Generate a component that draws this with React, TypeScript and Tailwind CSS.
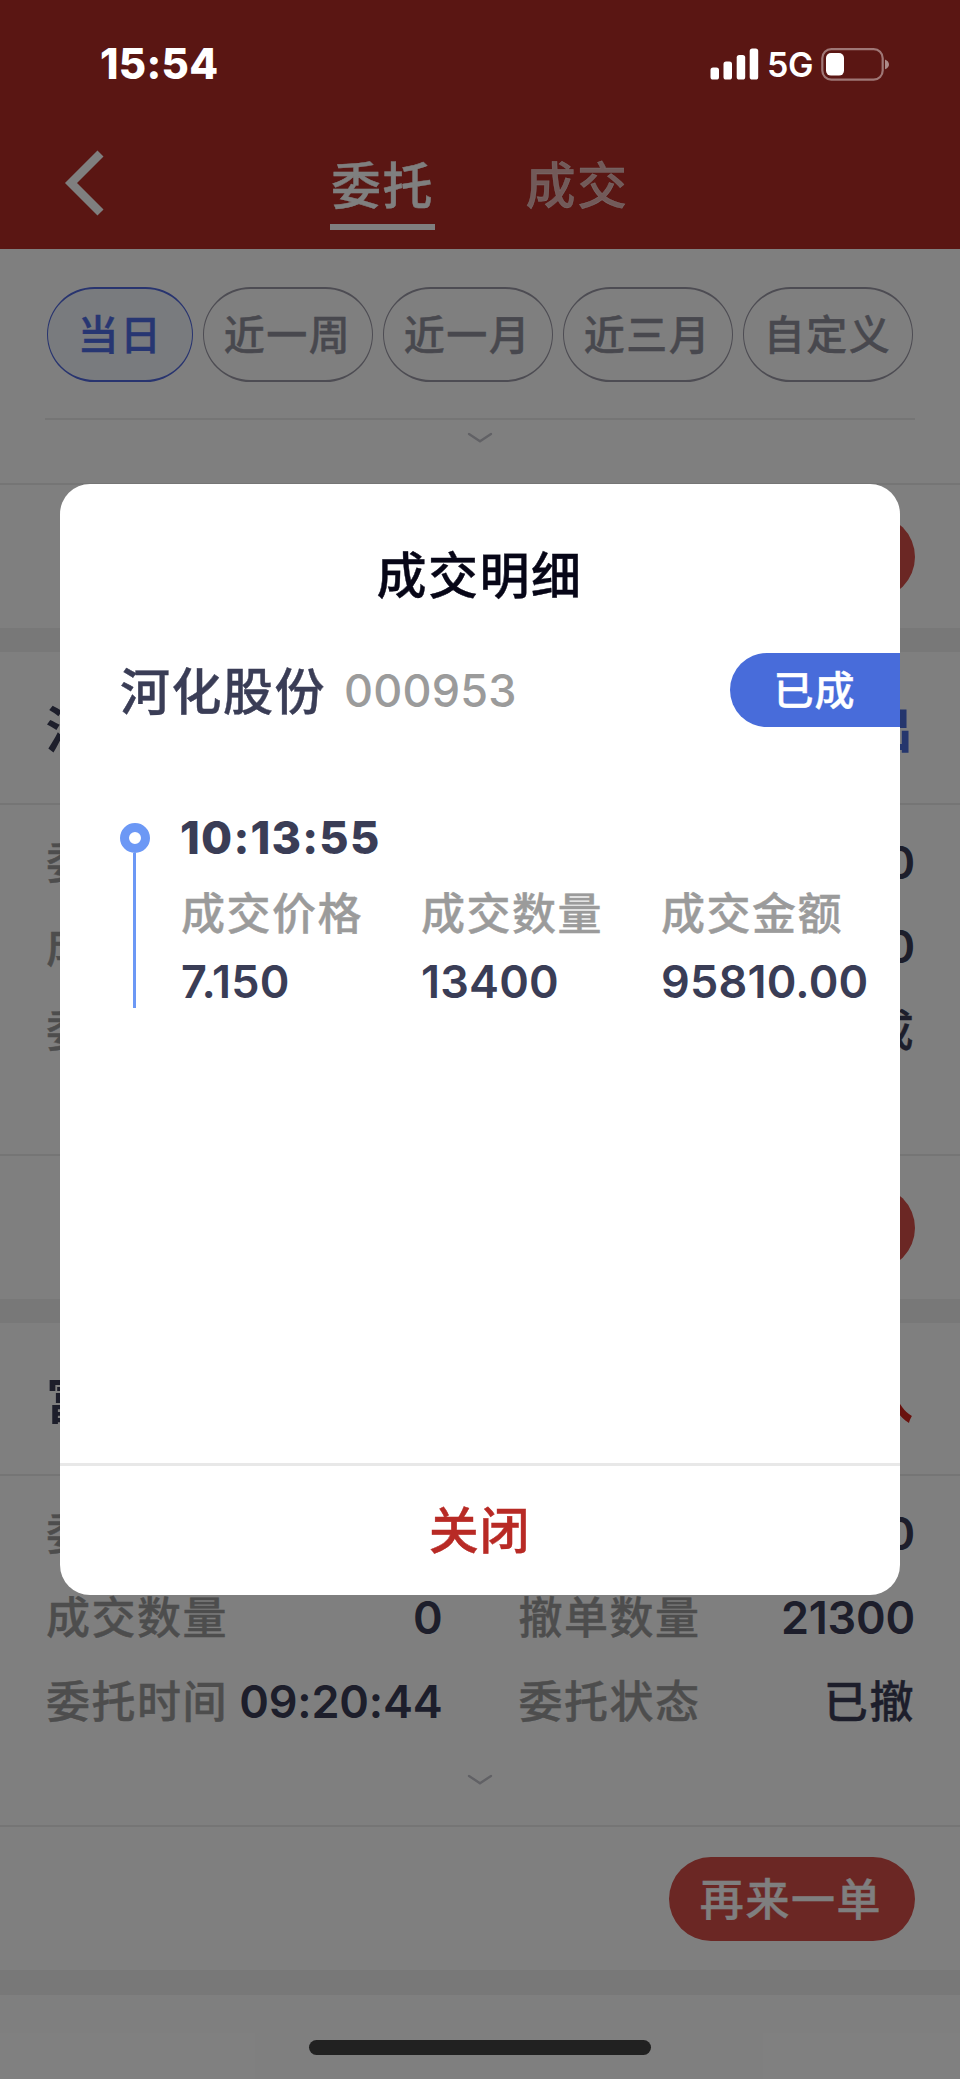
import { useState } from 'react';

interface Field {
  label: string;
  value: string;
}

interface Order {
  id: string;
  name: string;
  side: 'buy' | 'sell';
  fields: Field[];
}

const RANGES = ['当日', '近一周', '近一月', '近三月', '自定义'];

// thickens Chinese glyphs slightly, the installed face has no real medium weight
const CJK = 'font-medium [-webkit-text-stroke:0.4px]';

const ORDERS: Order[] = [
  {
    id: '1',
    name: '河化股份',
    side: 'sell',
    fields: [
      { label: '委托价格', value: '7.150' },
      { label: '委托数量', value: '13400' },
      { label: '成交数量', value: '13400' },
      { label: '撤单数量', value: '0' },
      { label: '委托时间', value: '10:13:55' },
      { label: '委托状态', value: '已成' },
    ],
  },
  {
    id: '2',
    name: '富',
    side: 'buy',
    fields: [
      { label: '委托价格', value: '0' },
      { label: '委托数量', value: '21300' },
      { label: '成交数量', value: '0' },
      { label: '撤单数量', value: '21300' },
      { label: '委托时间', value: '09:20:44' },
      { label: '委托状态', value: '已撤' },
    ],
  },
];

const DEAL: Field[] = [
  { label: '成交价格', value: '7.150' },
  { label: '成交数量', value: '13400' },
  { label: '成交金额', value: '95810.00' },
];

const StatusBar = () => (
  <div className="absolute inset-x-0 top-0 z-20 flex h-[128px] items-center justify-between pl-[100px] pr-[70px] text-white">
    <span className="text-[42px] leading-none font-extrabold tracking-[0.3px]">15:54</span>
    <div className="flex items-center">
      <svg width="50" height="32" viewBox="0 0 50 32" fill="currentColor">
        <rect x="0.5" y="19.5" width="8.5" height="12" rx="2.6" />
        <rect x="13.5" y="13.5" width="8.5" height="18" rx="2.6" />
        <rect x="26.7" y="7" width="8.5" height="24.5" rx="2.6" />
        <rect x="39.7" y="0.5" width="8.5" height="31" rx="2.6" />
      </svg>
      <span className="ml-[7px] w-[54px] pt-0.5 text-[34px] leading-none font-semibold tracking-[-0.3px]">5G</span>
      <svg width="69" height="33" viewBox="0 0 69 33" fill="none">
        <rect x="1.3" y="1.2" width="60.4" height="30.4" rx="9" stroke="white" strokeOpacity="0.42" strokeWidth="2.2" />
        <rect x="5" y="5" width="18" height="22.6" rx="5" fill="white" />
        <path d="M64 11.5C66.5 12.5 68 14.3 68 16.4C68 18.5 66.5 20.3 64 21.3Z" fill="white" fillOpacity="0.5" />
      </svg>
    </div>
  </div>
);

const ExpandArrow = () => (
  <svg width="26" height="12" viewBox="0 0 26 12" fill="none">
    <path d="M2 2L13 9.2L24 2" stroke="#c3c3cb" strokeWidth="2.4" strokeLinecap="round" />
  </svg>
);

const OrderFooter = () => (
  <div className="flex h-[145px] shrink-0 items-center justify-end border-t-2 border-[#ebebeb] pr-[45px]">
    <button className={`h-[84px] w-[246px] rounded-full bg-[#d64e48] pt-[3px] pr-0.5 text-[44px] leading-none tracking-[1.6px] text-white ${CJK}`}>
      再来一单
    </button>
  </div>
);

const OrderCard = ({ order }: { order: Order }) => (
  <div className="flex h-[647px] shrink-0 flex-col bg-white">
    <div className="flex h-[151px] shrink-0 items-center justify-between pt-[5px] pr-[46px] pl-[46px] text-[50px] font-bold tracking-[1px] text-[#3a3d56]">
      <span>{order.name}</span>
      <span className={order.side === 'buy' ? 'text-[#d2231b]' : 'text-[#4a6ddb]'}>
        {order.side === 'buy' ? '买入' : '卖出'}
      </span>
    </div>
    <div className="flex h-[351px] shrink-0 flex-col border-t-2 border-[#ebebeb] pt-[15px]">
      <div className="grid grid-cols-2 gap-x-[75px] px-[45px]">
        {order.fields.map(field => (
          <div key={field.label} className="flex h-[84px] items-center justify-between text-[45px] leading-none">
            <span className={`pt-0.5 pl-px text-[44px] tracking-[1.5px] text-[#9b9b9b] ${CJK}`}>{field.label}</span>
            {field.label === '委托状态' ? (
              <span className={`pt-0.5 text-[44px] tracking-[1.6px] text-[#3a3d56] ${CJK}`}>{field.value}</span>
            ) : (
              <span className="font-[560] tracking-[-0.2px] text-[#3a3d56]">{field.value}</span>
            )}
          </div>
        ))}
      </div>
      <div className="flex justify-center pt-[31px]">
        <ExpandArrow />
      </div>
    </div>
    <OrderFooter />
  </div>
);

const DealDialog = ({ onClose }: { onClose: () => void }) => (
  <div className="absolute inset-0 z-10 flex justify-center bg-black/50 pt-[484px]">
    <div className="flex h-[1111px] w-[840px] flex-col overflow-hidden rounded-[30px] bg-white">
      <h2 className={`mt-[55px] pr-px text-center text-[50px] leading-[74px] tracking-[1.5px] text-[#070617] ${CJK}`}>成交明细</h2>
      <div className="mt-[40px] flex h-[74px] items-center justify-between pl-[60px]">
        <div className="flex items-center">
          <span className={`pt-[3px] text-[50px] leading-none tracking-[1.5px] text-[#3a3d56] ${CJK}`}>河化股份</span>
          <span className="ml-[18px] text-[45px] leading-none font-[540] tracking-[0.2px] text-[#9b9b9b]">000953</span>
        </div>
        <span className={`flex h-full w-[170px] items-center justify-center rounded-l-full bg-[#486cda] pt-0.5 pr-px text-[40px] leading-none tracking-[1px] text-white ${CJK}`}>
          已成
        </span>
      </div>
      <div className="mt-[80px] flex pl-[60px]">
        <div className="flex w-[30px] flex-col pt-[16px]">
          <div className="h-[30px] w-[30px] rounded-full border-[9px] border-[#6c98f5]" />
          <div className="ml-[13px] h-[155px] w-[3px] bg-[#6c98f5]" />
        </div>
        <div className="ml-[30px] text-[45px] text-[#3a3d56]">
          <div className="leading-[62px] font-extrabold tracking-[1.2px]">10:13:55</div>
          <div className="mt-[10px] flex">
            {DEAL.map(item => (
              <div key={item.label} className="w-[240px]">
                <div className={`pl-px text-[44px] leading-[70px] tracking-[1.5px] text-[#9b9b9b] ${CJK}`}>{item.label}</div>
                <div className="-mt-px pl-px leading-[68px] font-[580] tracking-[0.2px]">{item.value}</div>
              </div>
            ))}
          </div>
        </div>
      </div>
      <button
        className={`mt-auto h-[132px] shrink-0 border-t-[3px] border-[#e8e8e8] pt-px pr-px text-[50px] leading-none tracking-[0.8px] text-[#b82a25] ${CJK}`}
        onClick={onClose}
      >
        关闭
      </button>
    </div>
  </div>
);

const App = () => {
  const [range, setRange] = useState<string>('当日');
  const [showDeal, setShowDeal] = useState<boolean>(true);

  return (
    <div className="relative flex h-[2079px] w-[960px] flex-col overflow-hidden bg-white font-['Inter','Noto_Sans_CJK_SC',sans-serif]">
      <StatusBar />

      <header className={`flex h-[249px] shrink-0 items-end bg-[#b42c26] pb-[19px] text-[50px] tracking-[1.4px] text-white ${CJK}`}>
        <button className="ml-[60px] mb-[12px]">
          <svg width="44" height="70" viewBox="0 0 44 70" fill="none">
            <path d="M40.5 5.5L11 35L40.5 64.5" stroke="white" strokeWidth="8.5" />
          </svg>
        </button>
        <div className="ml-[226px] flex gap-[90px]">
          <span className="h-[86px] w-[105px] border-b-[6px] border-white text-center leading-[84px]">委托</span>
          <span className="h-[86px] w-[104px] text-center leading-[84px] text-white/65">成交</span>
        </div>
      </header>

      <div className="flex shrink-0 justify-start gap-[10px] pt-[38px] pl-[47px]">
        {RANGES.map(item => (
          <button
            key={item}
            className={`h-[95px] rounded-full border-x border-y-2 pt-0.5 text-[41px] leading-none tracking-[1.5px] ${CJK} ${
              item === range
                ? 'w-[146px] border-[#5068de] bg-[#f3f7fd] text-[#4e6ce4]'
                : 'w-[170px] border-[#9b99a6] pr-px text-[#90909d]'
            }`}
            onClick={() => setRange(item)}
          >
            {item}
          </button>
        ))}
      </div>
      <div className="mx-[45px] mt-[36px] flex h-[65px] shrink-0 justify-center border-t-2 border-[#ebebeb] pt-[12px]">
        <ExpandArrow />
      </div>
      <OrderFooter />

      {ORDERS.map(order => (
        <div key={order.id} className="shrink-0 border-t-24 border-[#f1f1f1]">
          <OrderCard order={order} />
        </div>
      ))}
      <div className="h-[25px] shrink-0 bg-[#f1f1f1]" />

      {showDeal && <DealDialog onClose={() => setShowDeal(false)} />}
      <div className="absolute bottom-6 left-[309px] z-20 h-[15px] w-[342px] rounded-full bg-[#212121]" />
    </div>
  );
};

export default App;
